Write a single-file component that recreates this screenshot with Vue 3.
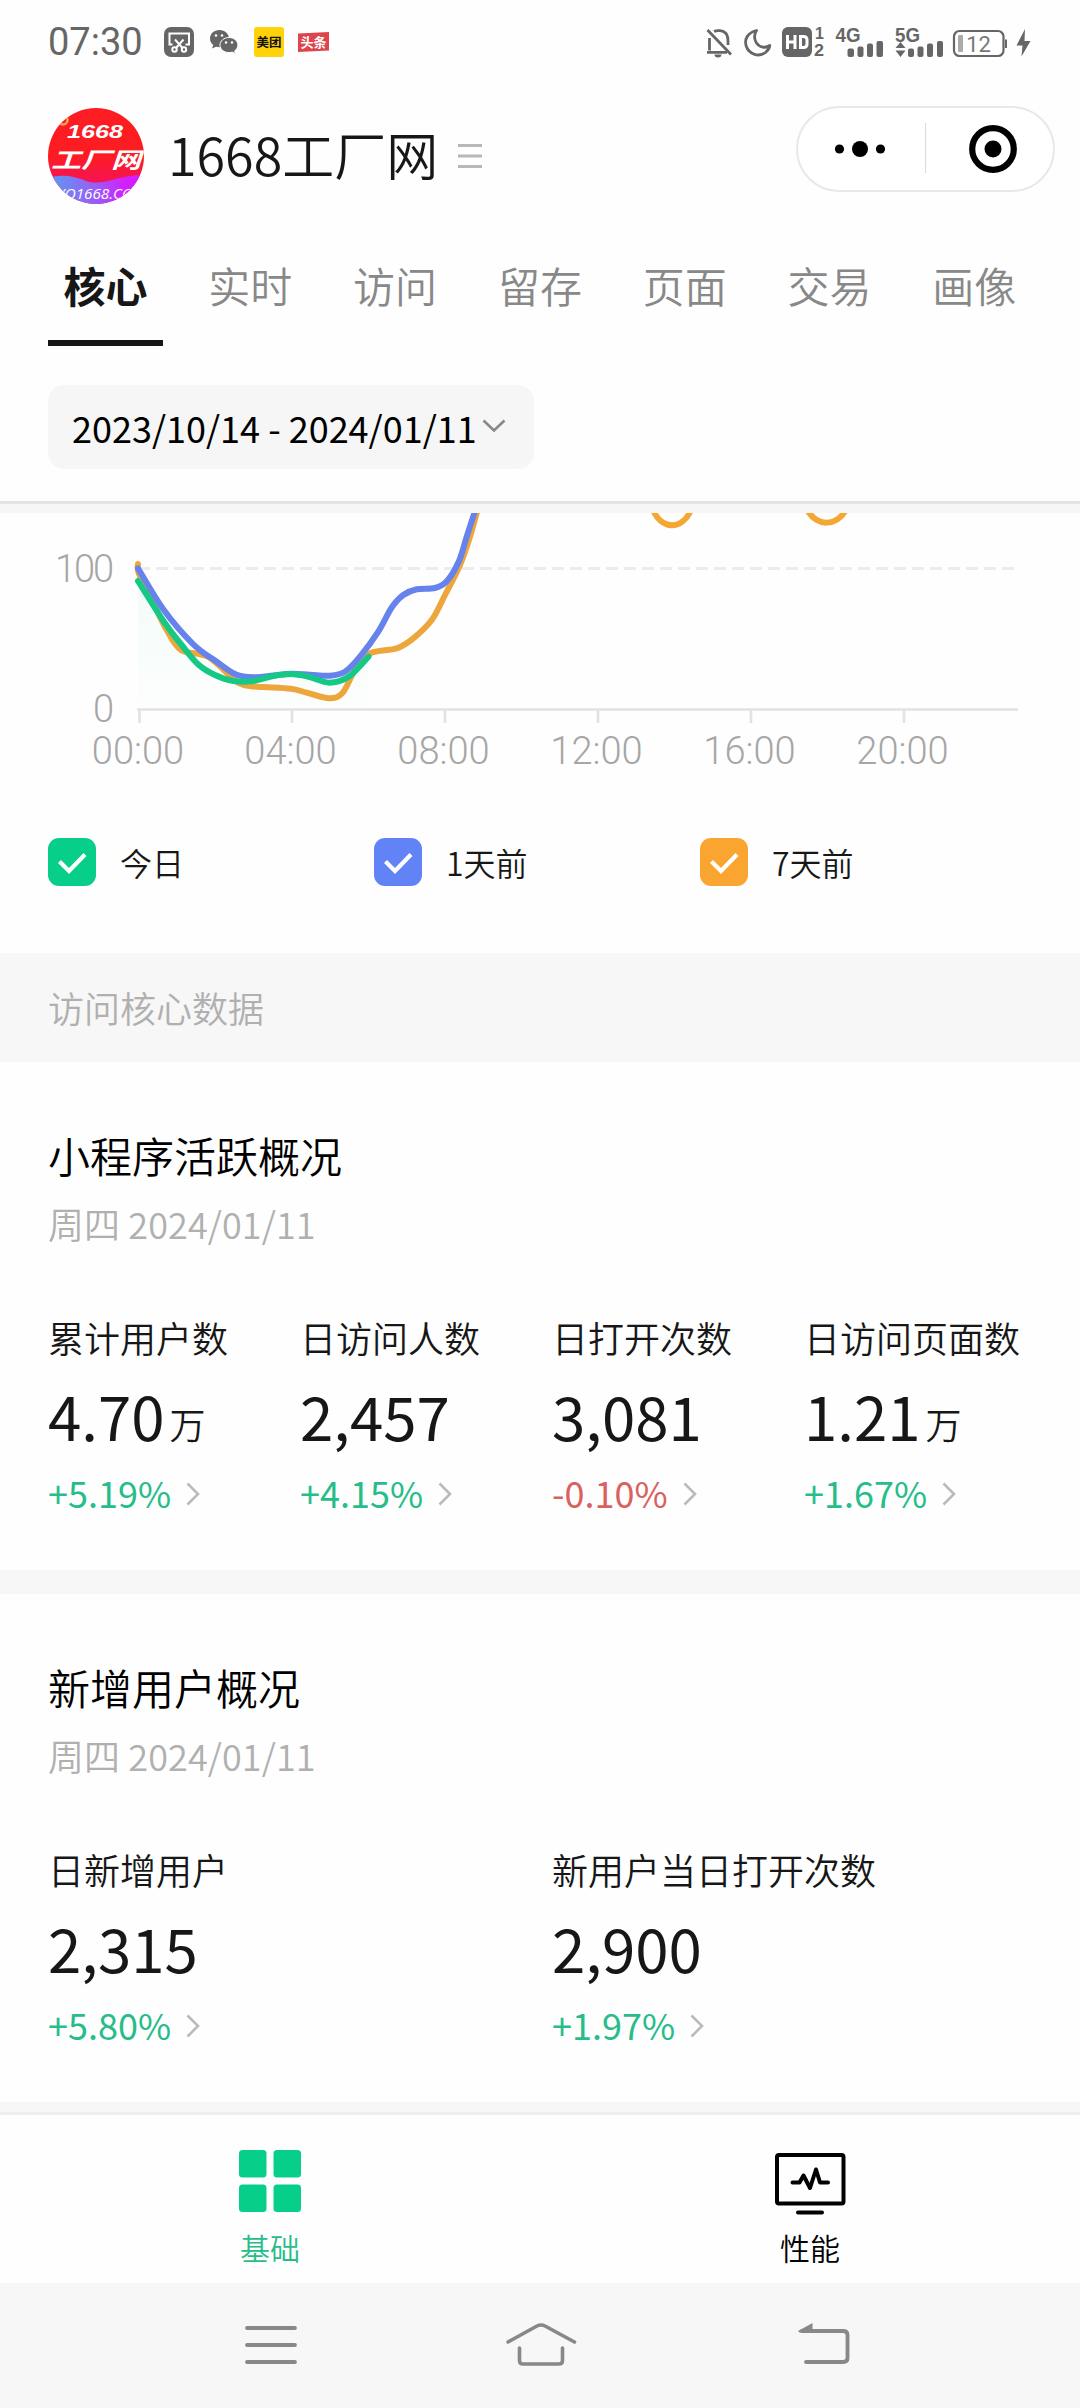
<script setup>
const tabs = ['核心', '实时', '访问', '留存', '页面', '交易', '画像']

const toPoints = (s) => s.split(' ').map((p) => p.split(',').map(Number))

// Catmull-Rom spline through the sampled points
function smooth(source) {
  const p = toPoints(source)
  let d = `M${p[0][0]} ${p[0][1]}`
  for (let i = 0; i < p.length - 1; i++) {
    const a = p[i - 1] || p[i]
    const b = p[i]
    const c = p[i + 1]
    const e = p[i + 2] || c
    const x1 = b[0] + (c[0] - a[0]) / 6
    const y1 = b[1] + (c[1] - a[1]) / 6
    const x2 = c[0] - (e[0] - b[0]) / 6
    const y2 = c[1] - (e[1] - b[1]) / 6
    d += `C${x1.toFixed(1)} ${y1.toFixed(1)} ${x2.toFixed(1)} ${y2.toFixed(1)} ${c[0]} ${c[1]}`
  }
  return d
}

const weekAgo = smooth('138,51 139,61 155,93.7 166.7,117 181,137 208.3,144 235,167.5 247,172.7 263.3,174 291,175.7 306.7,179.7 329.3,185.3 342.7,179.7 355,157 370,140.3 396.7,135.3 413.3,125.3 431.7,107 445,82 460,52 470,23.7 480,-12')
const yesterday = smooth('138,55.3 163.3,96.3 193.3,131.3 216.7,148.7 236,161.5 255,164.3 273.3,162.5 291.7,160.7 310,161.7 329.3,162.7 345,158.7 360,143.7 378.3,118.7 391.7,94.5 403.3,82 416.7,76.3 435,75 447,68 459,48 466.7,23.7 479,-14')
const today = smooth('138,68 165,110.3 181.7,132 198.3,151.5 215,162 233.3,168 253.3,168 273.3,163 291,161 308.3,163.7 329.3,169.7 349,163.5 368.5,143.7')
const todayArea = today + 'L369 196L138 196Z'

const ticks = [
  { x: 139.5, label: '00:00' },
  { x: 292, label: '04:00' },
  { x: 445, label: '08:00' },
  { x: 598, label: '12:00' },
  { x: 751, label: '16:00' },
  { x: 904, label: '20:00' }
]

const legend = [
  { name: '今日', color: '#07cf8a' },
  { name: '1天前', color: '#6283f6' },
  { name: '7天前', color: '#faa530' }
]

const cards = [
  {
    title: '小程序活跃概况',
    columns: 'four',
    stats: [
      { name: '累计用户数', value: '4.70', unit: '万', rate: '+5.19%' },
      { name: '日访问人数', value: '2,457', rate: '+4.15%' },
      { name: '日打开次数', value: '3,081', rate: '-0.10%' },
      { name: '日访问页面数', value: '1.21', unit: '万', rate: '+1.67%' }
    ]
  },
  {
    title: '新增用户概况',
    columns: 'two',
    stats: [
      { name: '日新增用户', value: '2,315', rate: '+5.80%' },
      { name: '新用户当日打开次数', value: '2,900', rate: '+1.97%' }
    ]
  }
]
</script>

<template>
  <div class="screen">
    <div class="status">
      <div class="status-left">
        <span class="clock">07:30</span>
        <svg class="i-cut" width="30" height="30" viewBox="0 0 30 30">
          <rect width="30" height="30" rx="7" fill="#666" />
          <g fill="none" stroke="#fff" stroke-width="2">
            <path d="M8.5 17.500H5.500V6.500H25V17.500H21.500M11 12.500L18.500 21M19.500 12.500L12 21" />
            <circle cx="10.500" cy="22.500" r="2.200" />
            <circle cx="20" cy="22.500" r="2.200" />
          </g>
        </svg>
        <svg class="i-wechat" width="30" height="30" viewBox="0 0 30 30">
          <path d="M10.500 3C4.700 3 1 7 1 11.500c0 2.700 1.300 4.900 3.300 6.500L3 21.500l4-1.800c1.200.300 2.300.500 3.500.500 5.500 0 9.500-3.800 9.500-8.500S16 3 10.500 3z" fill="#666" />
          <path d="M20 10.500c-5 0-9 3.300-9 7.600s4 7.500 9 7.500c1.100 0 2.200-.200 3.200-.500l3.300 1.600-.900-2.800c2-1.400 3.300-3.400 3.300-5.800 0-4.300-4-7.600-8.900-7.600z" fill="#666" stroke="#fff" stroke-width="1" />
          <g fill="#fff"><circle cx="7" cy="8.500" r="1.300" /><circle cx="13" cy="8.500" r="1.300" /><circle cx="17" cy="15.500" r="1.200" /><circle cx="23" cy="15.500" r="1.200" /></g>
        </svg>
        <span class="app-meituan">美团</span>
        <span class="app-toutiao">头条</span>
      </div>
      <svg class="status-right" width="334" height="36" viewBox="704 24 334 36">
        <g fill="none" stroke="#666" stroke-width="2.800">
          <path d="M708.500 30L732 54.500" />
          <path d="M710.500 38V50.500M708 52.300H728" />
          <path d="M715 31.500C718 30 724 30 727 33.500C729.500 36.500 729 40 729 45" />
        </g>
        <path d="M717 31a3 3 0 0 1 5 0zM715.500 54.500h7a3.500 3 0 0 1-7 0z" fill="#666" />
        <path d="M757.500 30.500C749 32.500 745 39 747.200 46C750 54.500 760 57.500 766.500 52.500C769.500 50 770.500 48 770.800 45.500C766.500 48.500 760.500 47.500 757.500 43C755 39 755 34.500 757.500 30.500Z" fill="none" stroke="#666" stroke-width="2.800" stroke-linejoin="round" />
        <rect x="783" y="27" width="30" height="30" rx="6" fill="#666" />
        <path d="M788.500 35V49M796 35V49M788.500 42H796M801.500 36.500H804.500Q808 36.500 808 40V44Q808 47.500 804.500 47.500H801.500Z" fill="none" stroke="#fff" stroke-width="3" />
        <g class="signal-text" fill="#666">
          <text x="816" y="38.500" font-size="16">1</text>
          <text x="815" y="56" font-size="16" textLength="10" lengthAdjust="spacingAndGlyphs">2</text>
          <text x="836.500" y="42" font-size="20" textLength="25" lengthAdjust="spacingAndGlyphs">4G</text>
          <text x="896" y="42" font-size="20" textLength="25" lengthAdjust="spacingAndGlyphs">5G</text>
        </g>
        <g fill="#666">
          <rect x="848.500" y="48.500" width="6.500" height="8.500" rx="2" /><rect x="858.500" y="46.500" width="6" height="10.500" rx="2" /><rect x="868" y="43.500" width="6" height="13.500" rx="2" /><rect x="877.500" y="41" width="6.500" height="16" rx="2" />
          <rect x="909" y="48.500" width="6" height="8.500" rx="2" /><rect x="918.500" y="46.500" width="6" height="10.500" rx="2" /><rect x="928" y="43.500" width="6" height="13.500" rx="2" /><rect x="938" y="41" width="6" height="16" rx="2" />
          <path d="M896.500 48L901.500 42L906.500 48ZM896.500 50.500H906.500L901.500 57Z" />
          <rect x="1006" y="39.500" width="2" height="8.500" />
          <path d="M1026 29L1017.500 45.500H1023.500L1022.500 56.500L1031.500 41H1025.500Z" />
        </g>
        <rect x="955" y="31" width="49.500" height="25" rx="5.500" fill="#fff" stroke="#666" stroke-width="2.200" />
        <rect x="959" y="35" width="5" height="17" rx="1" fill="#aaa" />
        <text class="battery" x="979.500" y="52" font-size="22" text-anchor="middle" fill="#777">12</text>
      </svg>
    </div>

    <header class="header">
      <svg class="avatar" width="96" height="96" viewBox="0 0 96 96">
        <defs>
          <clipPath id="avatar-clip"><circle cx="48" cy="48" r="48" /></clipPath>
          <linearGradient id="avatar-wave" x1="0" y1="0" x2="1" y2="0">
            <stop offset="0" stop-color="#5a9df0" /><stop offset=".5" stop-color="#9a5cf5" /><stop offset=".8" stop-color="#d31fff" />
          </linearGradient>
          <linearGradient id="avatar-red" x1="0" y1="0" x2="0" y2="1">
            <stop offset=".5" stop-color="#fd1c22" /><stop offset=".8" stop-color="#f5125a" />
          </linearGradient>
        </defs>
        <g clip-path="url(#avatar-clip)">
          <rect width="96" height="96" fill="url(#avatar-red)" />
          <circle cx="15" cy="12" r="4.500" fill="none" stroke="#f2a05b" stroke-width="2.500" />
          <path d="M0 70C14 66 26 68 38 73C56 79 72 66 96 67V96H0Z" fill="url(#avatar-wave)" />
          <text class="avatar-number" x="19" y="30" font-size="18" fill="#fff" textLength="56" lengthAdjust="spacingAndGlyphs">1668</text>
          <text class="avatar-name" x="3" y="59.500" font-size="22" fill="#fff" textLength="90" lengthAdjust="spacingAndGlyphs">工厂网</text>
          <text class="avatar-url" x="9" y="90.500" font-size="14" fill="#fff" textLength="76" lengthAdjust="spacingAndGlyphs">YQ1668.CO</text>
        </g>
      </svg>
      <h1 class="title">1668工厂网</h1>
      <svg class="menu" width="24" height="24" viewBox="0 0 24 24"><path d="M0 1.500H24M0 12H24M0 22.500H24" stroke="#b8b8b8" stroke-width="3" /></svg>
      <div class="capsule">
        <svg width="259" height="86" viewBox="0 0 259 86">
          <rect x="1" y="1" width="257" height="84" rx="42" fill="#fff" stroke="#e8e8e8" stroke-width="2" />
          <path d="M129.500 17V67" stroke="#ddd" stroke-width="1.200" />
          <circle cx="43.500" cy="43" r="4.600" /><circle cx="64" cy="43" r="8" /><circle cx="84.500" cy="43" r="4.600" />
          <circle cx="197" cy="43" r="20.800" fill="none" stroke="#000" stroke-width="6.200" /><circle cx="197" cy="43" r="8.500" />
        </svg>
      </div>
    </header>

    <nav class="tabs">
      <div v-for="(tab, i) in tabs" :key="tab" class="tab" :class="{ active: i === 0 }">{{ tab }}</div>
    </nav>

    <div class="filter">
      <div class="range">
        <span>2023/10/14 - 2024/01/11</span>
        <svg width="24" height="14" viewBox="0 0 24 14"><path d="M1.500 1.500L12 11.500L22.500 1.500" fill="none" stroke="#888" stroke-width="2.600" /></svg>
      </div>
    </div>

    <section class="chart">
      <svg width="1080" height="270" viewBox="0 0 1080 270">
        <defs>
          <linearGradient id="area" x1="0" y1="0" x2="0" y2="1">
            <stop offset="0" stop-color="#07cf8a" stop-opacity=".05" /><stop offset="1" stop-color="#07cf8a" stop-opacity=".005" />
          </linearGradient>
        </defs>
        <path d="M138 55.500H1018" stroke="#ececec" stroke-width="3" stroke-dasharray="12 6" />
        <path d="M137 196.500H1018" stroke="#e2e2e2" stroke-width="2.600" />
        <path v-for="t in ticks" :key="t.x" :d="`M${t.x} 197V210`" stroke="#e2e2e2" stroke-width="2.600" />
        <path :d="todayArea" fill="url(#area)" />
        <g fill="none" stroke-width="6" stroke-linecap="round">
          <path :d="weekAgo" stroke="#eda63c" />
          <path d="M652 -5C661 17 682 19 692 -5M806 -5C817 15 837 14 847 -5" stroke="#f4a733" />
          <path :d="yesterday" stroke="#6682ec" />
          <path :d="today" stroke="#15c885" />
        </g>
        <g class="axis">
          <text x="114" y="69" text-anchor="end" textLength="59">100</text>
          <text x="114" y="209" text-anchor="end">0</text>
          <text v-for="t in ticks" :key="t.label" :x="t.x - 1.500" y="251" text-anchor="middle">{{ t.label }}</text>
        </g>
      </svg>
    </section>

    <div class="legend">
      <div v-for="item in legend" :key="item.name" class="legend-item">
        <svg width="48" height="48" viewBox="0 0 48 48">
          <rect width="48" height="48" rx="11" :fill="item.color" />
          <path d="M11.500 23.500L21 33L37 16.500" fill="none" stroke="#fff" stroke-width="4.200" />
        </svg>
        <span>{{ item.name }}</span>
      </div>
    </div>

    <div class="section-title">访问核心数据</div>

    <section v-for="card in cards" :key="card.title" class="card">
      <h2>{{ card.title }}</h2>
      <p class="date">周四 2024/01/11</p>
      <div class="stats" :class="card.columns">
        <div v-for="s in card.stats" :key="s.name" class="stat">
          <div class="name">{{ s.name }}</div>
          <div class="value">{{ s.value }}<span v-if="s.unit" class="unit">{{ s.unit }}</span></div>
          <div class="rate" :class="{ down: s.rate[0] === '-' }">
            <span>{{ s.rate }}</span>
            <svg width="14" height="24" viewBox="0 0 14 24"><path d="M1.500 1.500L12 12L1.500 22.500" fill="none" stroke="#bbb" stroke-width="2.600" /></svg>
          </div>
        </div>
      </div>
    </section>

    <footer class="bottom-tabs">
      <div class="bottom-tab current">
        <svg width="72" height="72" viewBox="0 0 72 72" fill="#07cf8a">
          <rect x="5" y="5" width="27.500" height="27.500" rx="3.500" /><rect x="39.500" y="5" width="27.500" height="27.500" rx="3.500" />
          <rect x="5" y="39.500" width="27.500" height="27.500" rx="3.500" /><rect x="39.500" y="39.500" width="27.500" height="27.500" rx="3.500" />
        </svg>
        <span>基础</span>
      </div>
      <div class="bottom-tab">
        <svg width="72" height="72" viewBox="0 0 72 72" fill="none" stroke="#000" stroke-width="4">
          <rect x="3" y="10" width="66.500" height="48.500" rx="2" />
          <path d="M18.500 37.500H25.500L29.500 30.500L36 43L42 24.500L46 37.500H54" stroke-linecap="round" stroke-linejoin="round" stroke-width="4" />
          <path d="M24 67.500H48" stroke-linecap="round" />
        </svg>
        <span>性能</span>
      </div>
    </footer>

    <div class="system-nav">
      <svg width="52" height="46" viewBox="0 0 52 46"><path d="M2 6H50M2 23H50M2 40H50" stroke="#888" stroke-width="3.800" stroke-linecap="round" /></svg>
      <svg class="home" width="72" height="46" viewBox="0 0 72 46" fill="none" stroke="#888" stroke-width="3.600" stroke-linecap="round" stroke-linejoin="round"><path d="M3 20L32 4Q36 2 40 4L69.500 20M14.500 26V38.500Q14.500 42 18 42H54Q57.500 42 57.500 38.500V26" /></svg>
      <svg width="52" height="46" viewBox="0 0 52 46"><path d="M8 40H45Q49.500 40 49.500 36V13Q49.500 9 45 9H4" fill="none" stroke="#888" stroke-width="3.800" stroke-linecap="round" /><path d="M0 9L14.500 1V10.500H1.500Z" fill="#888" /></svg>
    </div>
  </div>
</template>

<style>
body { margin: 0; background: #fefefe; }
</style>

<style scoped>
.screen { width: 1080px; height: 2408px; overflow: hidden; display: flex; flex-direction: column; background: #fefefe; color: #171717; font-family: "Noto Sans CJK SC", sans-serif; }
.status { height: 84px; padding: 0 43px 0 48px; display: flex; justify-content: space-between; align-items: center; box-sizing: border-box; flex: none; }
.status-left { display: flex; align-items: center; }
.clock { width: 116px; font: 400 38px/44px Roboto, sans-serif; color: #666; }
.i-wechat { margin-left: 15px; }
.app-meituan { width: 30px; height: 30px; margin-left: 15px; border-radius: 3px; background: #ffd20a; color: #111; font-size: 12.500px; font-weight: 700; line-height: 29px; text-align: center; }
.app-toutiao { width: 31px; height: 20px; margin-left: 14px; background: #dd444c; color: #fff; font-size: 13px; font-weight: 700; line-height: 19px; text-align: center; clip-path: polygon(0 8%, 100% 0, 100% 92%, 0 100%); }
.status-right { display: block; }
.signal-text { font-family: "Liberation Sans", sans-serif; font-weight: 700; }
.battery { font-family: Roboto, sans-serif; }

.header { height: 144px; padding-left: 48px; padding-right: 25px; display: flex; align-items: flex-start; box-sizing: border-box; flex: none; }
.avatar { margin-top: 24px; flex: none; }
.avatar-number { font-family: "Liberation Sans", sans-serif; font-weight: 700; font-style: italic; }
.avatar-name { font-family: "Noto Sans CJK SC", sans-serif; font-weight: 700; font-style: italic; }
.avatar-url { font-family: "Open Sans", sans-serif; font-style: italic; }
.title { width: 270px; margin: 34px 0 0 24px; font-size: 52px; line-height: 72px; font-weight: 350; white-space: nowrap; }
.menu { margin: 60px 0 0 20px; }
.capsule { margin-left: auto; margin-top: 22px; }
.capsule svg { display: block; }

.tabs { height: 119px; padding-left: 48px; display: flex; gap: 29.800px; box-sizing: border-box; flex: none; }
.tab { width: 115px; height: 118px; box-sizing: border-box; padding-top: 27px; text-align: center; font-size: 42px; line-height: 60px; font-weight: 350; color: #888; white-space: nowrap; flex: none; }
.tab.active { font-weight: 700; color: #171717; border-bottom: 6px solid #171717; }
.filter { height: 166px; padding: 38px 48px 0; box-sizing: border-box; border-bottom: 9px solid #f6f6f6; box-shadow: inset 0 -3px #e3e3e3; flex: none; }
.range { width: 486px; height: 84px; padding-left: 24px; box-sizing: border-box; border-radius: 16px; background: #f6f6f6; color: #000; display: flex; align-items: center; font-size: 36px; white-space: nowrap; }
.range svg { margin: 0 0 3px 5px; }
.chart { height: 325px; flex: none; }
.chart svg { display: block; }
.axis { font: 300 38px Roboto, sans-serif; fill: #a6a6a6; }
.legend { height: 115px; padding-left: 48px; display: flex; flex: none; }
.legend-item { width: 326px; height: 48px; display: flex; align-items: center; gap: 24px; font-size: 32px; font-weight: 350; }
.section-title { height: 109px; padding-left: 48px; line-height: 109px; font-size: 36px; font-weight: 350; color: #b0b0b0; background: #f7f7f7; flex: none; }

.card { height: 532px; padding: 62px 0 0 48px; box-sizing: border-box; border-bottom: 24px solid #f7f7f7; flex: none; }
.card h2 { margin: 0; font-size: 42px; line-height: 62px; font-weight: 350; color: #000; }
.date { margin: 10px 0 0; font-size: 36px; line-height: 54px; font-weight: 350; letter-spacing: .1px; color: #b0b0b0; }
.stats { display: grid; margin-top: 60px; }
.four { grid-template-columns: repeat(4, 252px); }
.two { grid-template-columns: repeat(2, 504px); }
.stat { white-space: nowrap; }
.name { font-size: 36px; line-height: 54px; font-weight: 350; }
.value { height: 84px; margin-top: 9px; font-size: 60px; line-height: 84px; }
.unit { font-size: 36px; margin-left: 5px; font-weight: 350; position: relative; top: -2px; }
.rate { margin-top: 9px; height: 52px; display: flex; align-items: center; gap: 15px; font-size: 36px; line-height: 52px; color: #27bd8a; }
.rate svg { margin-top: 3px; }
.rate.down { color: #d9625f; }

.bottom-tabs { height: 171px; margin-top: -14px; display: flex; position: relative; background: #fefefe; border-top: 3px solid #eee; box-sizing: border-box; flex: none; }
.bottom-tab { flex: 1; padding-top: 30px; display: flex; flex-direction: column; align-items: center; font-size: 30px; line-height: 44px; font-weight: 350; color: #000; }
.bottom-tab span { margin-top: 8px; }
.current { color: #27bd8a; }
.system-nav { height: 127px; padding: 0 229px 3px 245px; display: flex; align-items: center; background: #f7f7f7; box-sizing: border-box; flex: none; }
.home { margin: 0 221px 0 208px; flex: none; }
</style>
